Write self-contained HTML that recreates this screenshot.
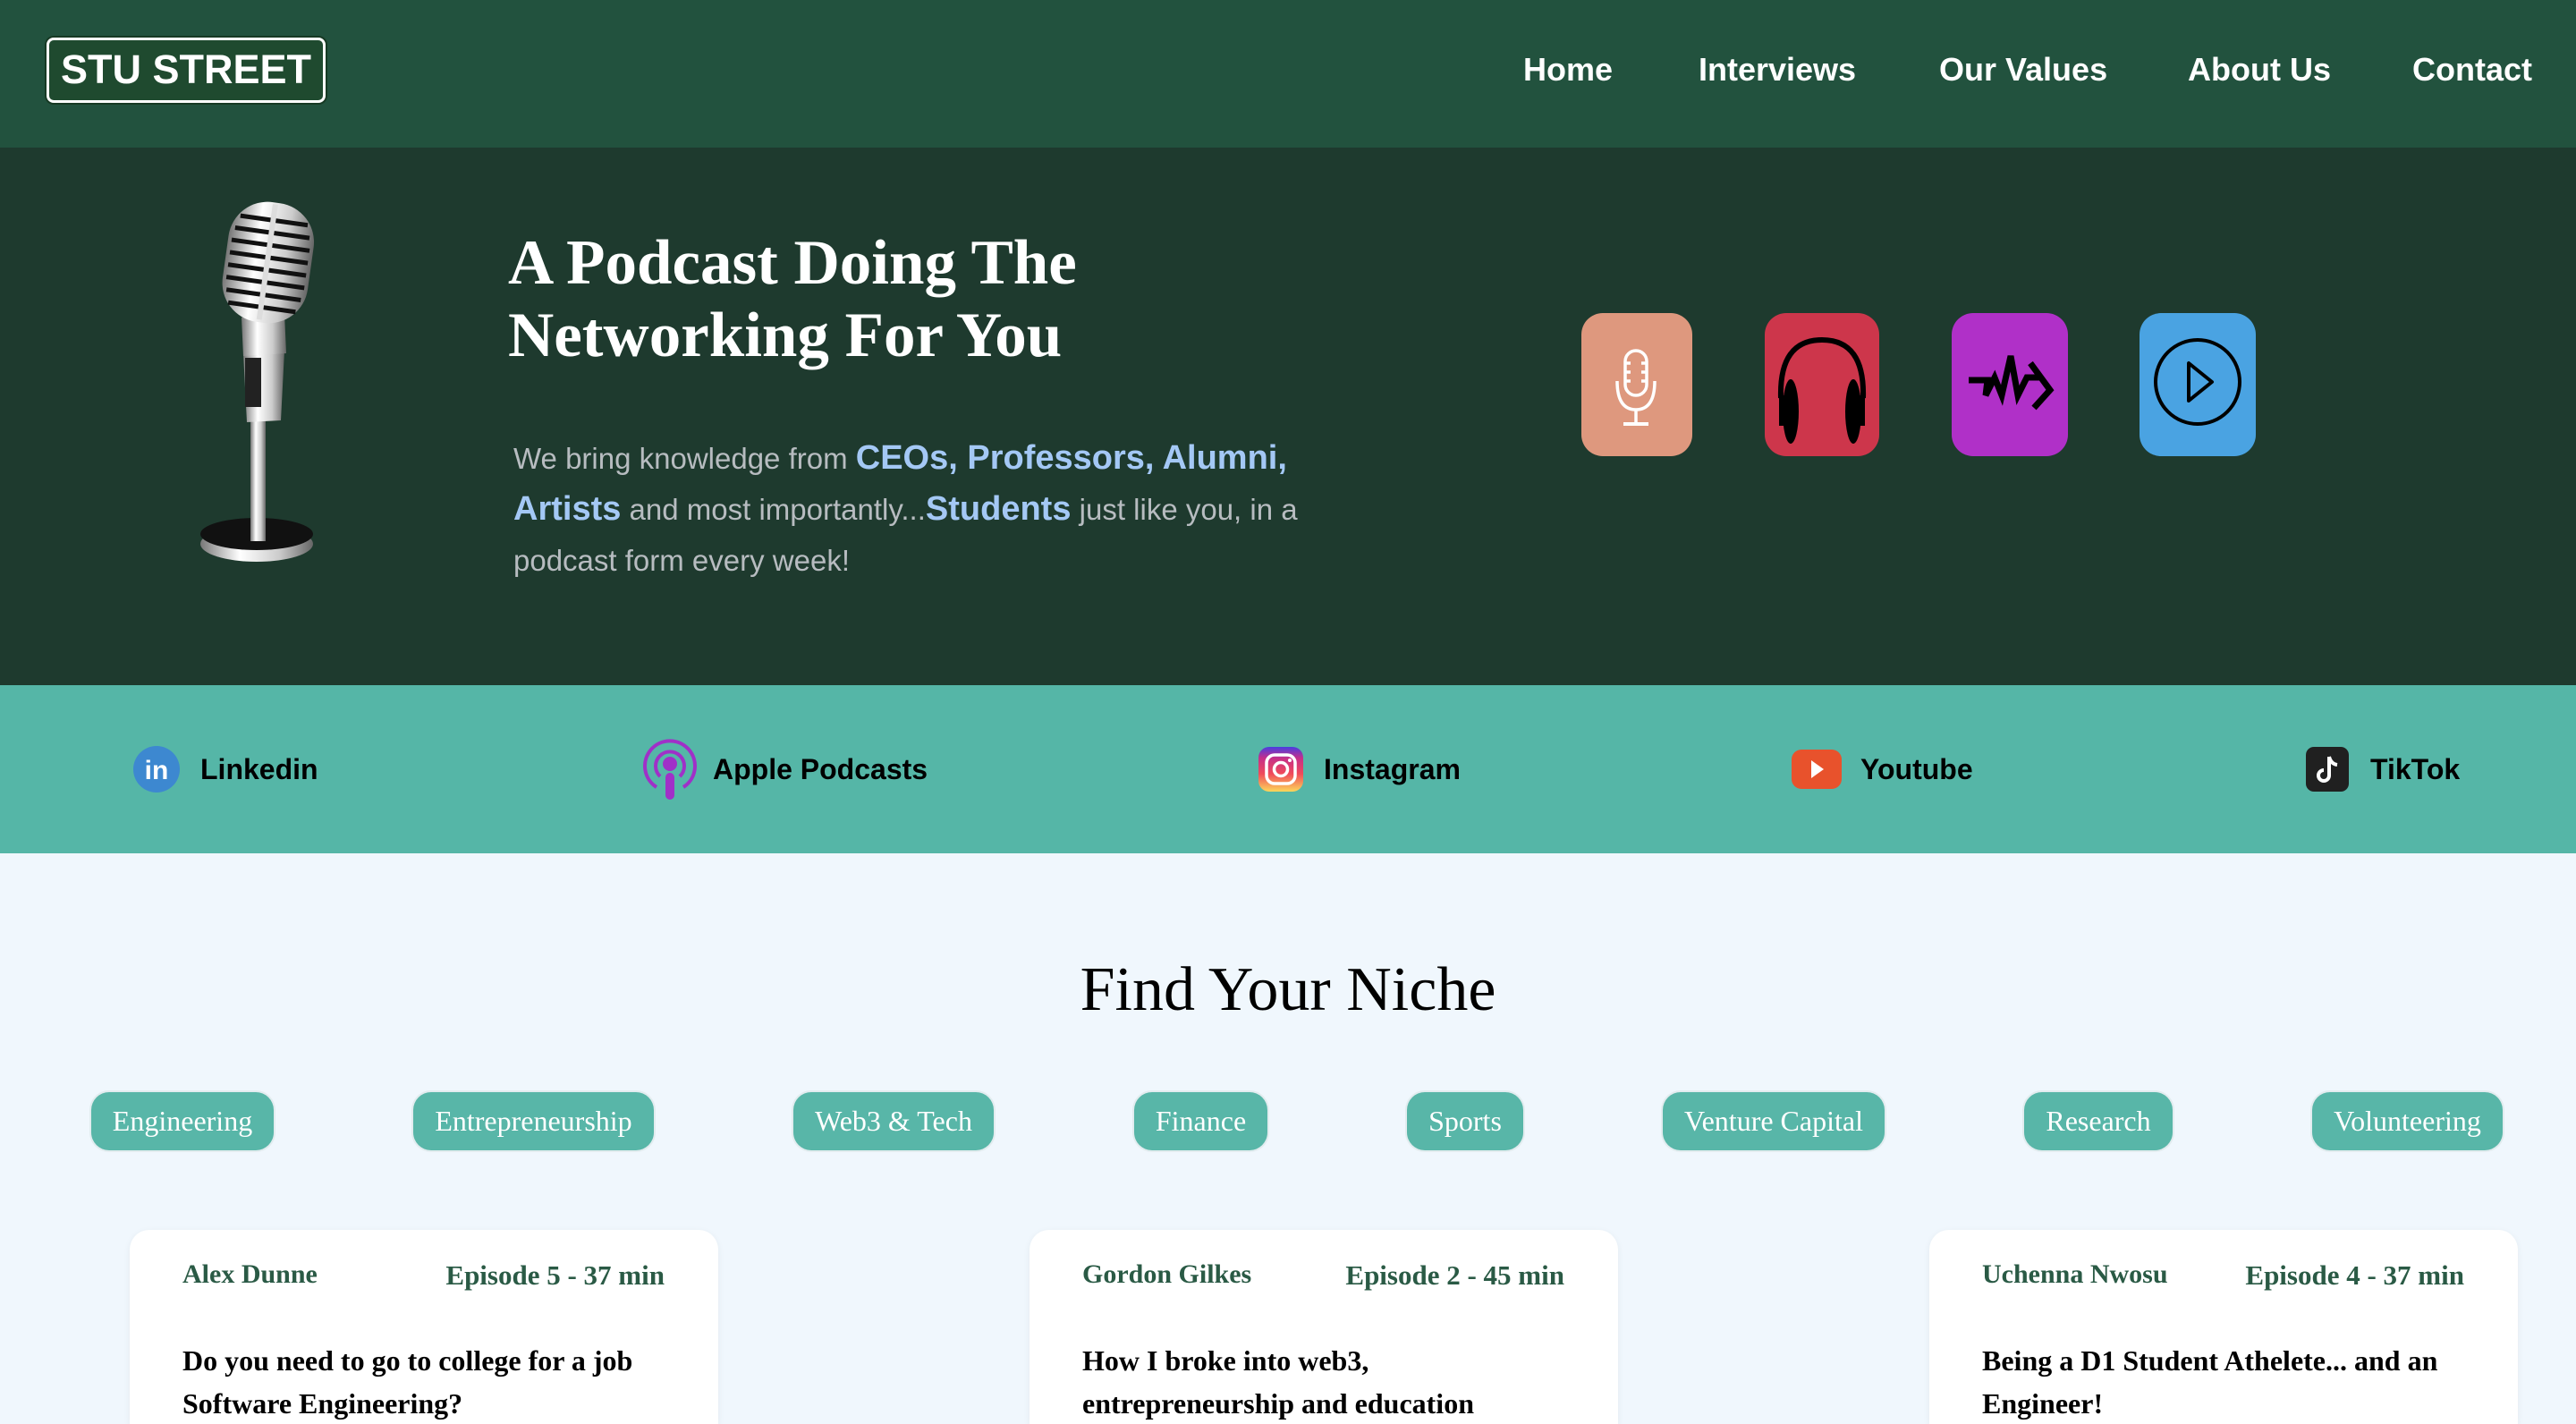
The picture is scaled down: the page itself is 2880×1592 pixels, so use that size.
<!DOCTYPE html>
<html style="overflow:hidden;width:2880px;height:1592px"><head><meta charset="utf-8"><style>
*{margin:0;padding:0;box-sizing:border-box}
body{width:2880px;height:1592px;overflow:hidden;background:#f0f7fd;font-family:"Liberation Sans",sans-serif;position:relative}
.abs{position:absolute}
#nav{left:0;top:0;width:2880px;height:165px;background:#22523e}
#logo{left:52px;top:42px;width:312px;height:73px;border:3px solid #fff;border-radius:8px;background:#1f4a2f;color:#fff;font-weight:bold;font-size:45px;line-height:66px;text-align:center;box-shadow:0 0 0 2px #173a24}
.nl{top:56px;color:#fff;font-size:36px;font-weight:bold;line-height:44px}
#hero{left:0;top:165px;width:2880px;height:601px;background:#1e3a2e}
h1{position:absolute;left:568px;top:254px;font-family:"Liberation Serif",serif;font-weight:bold;font-size:71px;line-height:81px;color:#fff}
#para{left:574px;top:484px;width:900px;font-size:33px;line-height:57px;color:#b7bcc0}
#para b{color:#a4c8f5;font-size:38px}
.tile{top:350px;width:124px;height:160px;border-radius:24px}
#band{left:0;top:766px;width:2880px;height:188px;background:#55b6a7}
.st{top:840px;font-size:32px;font-weight:bold;color:#000;line-height:40px}
h2{position:absolute;left:0;width:2880px;text-align:center;top:1062px;font-family:"Liberation Serif",serif;font-weight:normal;font-size:70px;line-height:90px;color:#000}
.pill{top:1221px;height:65px;border-radius:20px;background:#58b6a8;color:#fff;font-family:"Liberation Serif",serif;font-size:32px;line-height:65px;text-align:center;box-shadow:0 0 0 2px #e2ecef}
.card{top:1375px;width:658px;height:217px;background:#fff;border-radius:22px 22px 0 0;box-shadow:0 2px 8px rgba(0,0,0,.06);font-family:"Liberation Serif",serif}
.card .n{position:absolute;left:59px;top:33px;font-size:30px;font-weight:bold;color:#2a5a45}
.card .e{position:absolute;right:60px;top:33px;font-size:31px;font-weight:bold;color:#2a5a45}
.card .t{position:absolute;left:59px;top:122px;width:560px;font-size:32px;font-weight:bold;line-height:48px;color:#000}
</style></head><body>
<div id="nav" class="abs"></div>
<div id="logo" class="abs">STU STREET</div>
<div class="abs nl" style="left:1703px">Home</div>
<div class="abs nl" style="left:1899px">Interviews</div>
<div class="abs nl" style="left:2168px">Our Values</div>
<div class="abs nl" style="left:2446px">About Us</div>
<div class="abs nl" style="left:2697px">Contact</div>

<div id="hero" class="abs"></div>
<svg class="abs" style="left:215px;top:220px" width="150" height="415" viewBox="215 220 150 415">
<defs><linearGradient id="ch" x1="0" x2="1"><stop offset="0" stop-color="#777"/><stop offset=".35" stop-color="#fff"/><stop offset=".7" stop-color="#ccc"/><stop offset="1" stop-color="#666"/></linearGradient></defs>
<ellipse cx="287" cy="608" rx="63" ry="20" fill="url(#ch)"/>
<ellipse cx="287" cy="597" rx="63" ry="18" fill="#111"/>
<rect x="280" y="465" width="17" height="140" fill="url(#ch)"/>
<path d="M272 395 L318 392 L314 470 L276 472 Z" fill="url(#ch)"/>
<rect x="274" y="400" width="18" height="55" fill="#222"/>
<path d="M270 355 L318 350 L320 395 L272 398 Z" fill="url(#ch)"/>
<g transform="rotate(8 300 292)"><rect x="252" y="226" width="96" height="135" rx="44" fill="url(#ch)"/>
<g stroke="#111" stroke-width="5">
<line x1="262" y1="246" x2="338" y2="246"/><line x1="258" y1="260" x2="342" y2="260"/><line x1="256" y1="274" x2="344" y2="274"/><line x1="256" y1="288" x2="344" y2="288"/><line x1="256" y1="302" x2="344" y2="302"/><line x1="256" y1="316" x2="344" y2="316"/><line x1="258" y1="330" x2="342" y2="330"/><line x1="262" y1="344" x2="338" y2="344"/></g>
<rect x="296" y="228" width="6" height="130" fill="#ddd"/></g>
</svg>
<h1>A Podcast Doing The<br>Networking For You</h1>
<div id="para" class="abs">We bring knowledge from <b>CEOs, Professors, Alumni, Artists</b> and most importantly...<b>Students</b> just like you, in a podcast form every week!</div>

<div class="abs tile" style="left:1768px;background:#de987e"></div>
<svg class="abs" style="left:1768px;top:350px" width="124" height="160" viewBox="0 0 124 160"><g fill="none" stroke="#fff" stroke-width="3.5"><rect x="49" y="42" width="24" height="50" rx="12"/><path d="M40 76 Q40 108 61 108 Q82 108 82 76"/><line x1="61" y1="108" x2="61" y2="124"/><line x1="47" y1="124" x2="75" y2="124" stroke-width="4"/><line x1="49" y1="56" x2="55" y2="56"/><line x1="49" y1="66" x2="55" y2="66"/><line x1="49" y1="76" x2="55" y2="76"/><line x1="67" y1="56" x2="73" y2="56"/><line x1="67" y1="66" x2="73" y2="66"/><line x1="67" y1="76" x2="73" y2="76"/></g></svg>
<div class="abs tile" style="left:1973px;width:128px;background:#cd364b"></div>
<svg class="abs" style="left:1973px;top:350px" width="128" height="160" viewBox="0 0 128 160"><path d="M18 95 Q16 30 64 30 Q112 30 110 95" fill="none" stroke="#000" stroke-width="6"/><ellipse cx="29" cy="110" rx="9" ry="36" fill="#000"/><ellipse cx="99" cy="110" rx="9" ry="36" fill="#000"/><rect x="16" y="92" width="8" height="34" fill="#000"/><rect x="104" y="92" width="8" height="34" fill="#000"/></svg>
<div class="abs tile" style="left:2182px;width:130px;background:#b030c8"></div>
<svg class="abs" style="left:2182px;top:350px" width="130" height="160" viewBox="0 0 130 160"><path d="M19 75 L40 75 L38 92 L48 72 L56 92 L66 48 L74 92 L84 72 L98 72" fill="none" stroke="#000" stroke-width="7" stroke-linejoin="miter"/><path d="M88 56 L110 86 L92 106" fill="none" stroke="#000" stroke-width="7"/></svg>
<div class="abs tile" style="left:2392px;width:130px;background:#4aa3e2"></div>
<svg class="abs" style="left:2392px;top:350px" width="130" height="160" viewBox="0 0 130 160"><ellipse cx="65" cy="77" rx="47" ry="47" fill="none" stroke="#000" stroke-width="4"/><path d="M55 56 L55 98 L81 77 Z" fill="none" stroke="#000" stroke-width="4" stroke-linejoin="round"/></svg>

<div id="band" class="abs"></div>
<svg class="abs" style="left:148px;top:833px" width="54" height="54" viewBox="0 0 54 54"><circle cx="27" cy="27" r="26" fill="#3d88d0"/><text x="27" y="38" text-anchor="middle" font-family="Liberation Sans" font-weight="bold" font-size="30" fill="#fff">in</text></svg>
<div class="abs st" style="left:224px">Linkedin</div>
<svg class="abs" style="left:716px;top:822px" width="66" height="76" viewBox="0 0 66 76"><g fill="none" stroke="#a030c8" stroke-width="4"><path d="M18 58 A28 28 0 1 1 48 58"/><path d="M22 46 A16 16 0 1 1 44 46"/></g><circle cx="33" cy="32" r="8" fill="#a030c8"/><rect x="28" y="42" width="10" height="30" rx="5" fill="#a030c8"/></svg>
<div class="abs st" style="left:797px">Apple Podcasts</div>
<svg class="abs" style="left:1407px;top:835px" width="50" height="50" viewBox="0 0 50 50"><defs><linearGradient id="ig" x1="0" y1="1" x2="0" y2="0"><stop offset="0" stop-color="#fcd75a"/><stop offset=".4" stop-color="#f04a5a"/><stop offset=".75" stop-color="#c52f8a"/><stop offset="1" stop-color="#4a3ee0"/></linearGradient></defs><rect width="50" height="50" rx="12" fill="url(#ig)"/><rect x="9" y="9" width="32" height="32" rx="9" fill="none" stroke="#fff" stroke-width="3.5"/><circle cx="25" cy="25" r="7.5" fill="none" stroke="#fff" stroke-width="3.5"/><circle cx="35" cy="15" r="2" fill="#fff"/></svg>
<div class="abs st" style="left:1480px">Instagram</div>
<svg class="abs" style="left:2003px;top:838px" width="56" height="44" viewBox="0 0 56 44"><rect width="56" height="44" rx="11" fill="#e8522c"/><path d="M22 12 L36 22 L22 32 Z" fill="#fff"/></svg>
<div class="abs st" style="left:2080px">Youtube</div>
<svg class="abs" style="left:2578px;top:835px" width="48" height="50" viewBox="0 0 48 50"><rect width="48" height="50" rx="9" fill="#202020"/><path d="M26 11 L26 32 A6 6 0 1 1 20 26 M26 11 Q28 19 35 20" fill="none" stroke="#fff" stroke-width="4"/></svg>
<div class="abs st" style="left:2650px">TikTok</div>

<h2>Find Your Niche</h2>
<div class="abs pill" style="left:102px;width:204px">Engineering</div>
<div class="abs pill" style="left:462px;width:269px">Entrepreneurship</div>
<div class="abs pill" style="left:887px;width:224px">Web3 &amp; Tech</div>
<div class="abs pill" style="left:1268px;width:149px">Finance</div>
<div class="abs pill" style="left:1573px;width:130px">Sports</div>
<div class="abs pill" style="left:1859px;width:248px">Venture Capital</div>
<div class="abs pill" style="left:2263px;width:166px">Research</div>
<div class="abs pill" style="left:2585px;width:213px">Volunteering</div>

<div class="abs card" style="left:145px"><div class="n">Alex Dunne</div><div class="e">Episode 5 - 37 min</div><div class="t">Do you need to go to college for a job Software Engineering?</div></div>
<div class="abs card" style="left:1151px"><div class="n">Gordon Gilkes</div><div class="e">Episode 2 - 45 min</div><div class="t">How I broke into web3, entrepreneurship and education</div></div>
<div class="abs card" style="left:2157px"><div class="n">Uchenna Nwosu</div><div class="e">Episode 4 - 37 min</div><div class="t">Being a D1 Student Athelete... and an Engineer!</div></div>
</body></html>
